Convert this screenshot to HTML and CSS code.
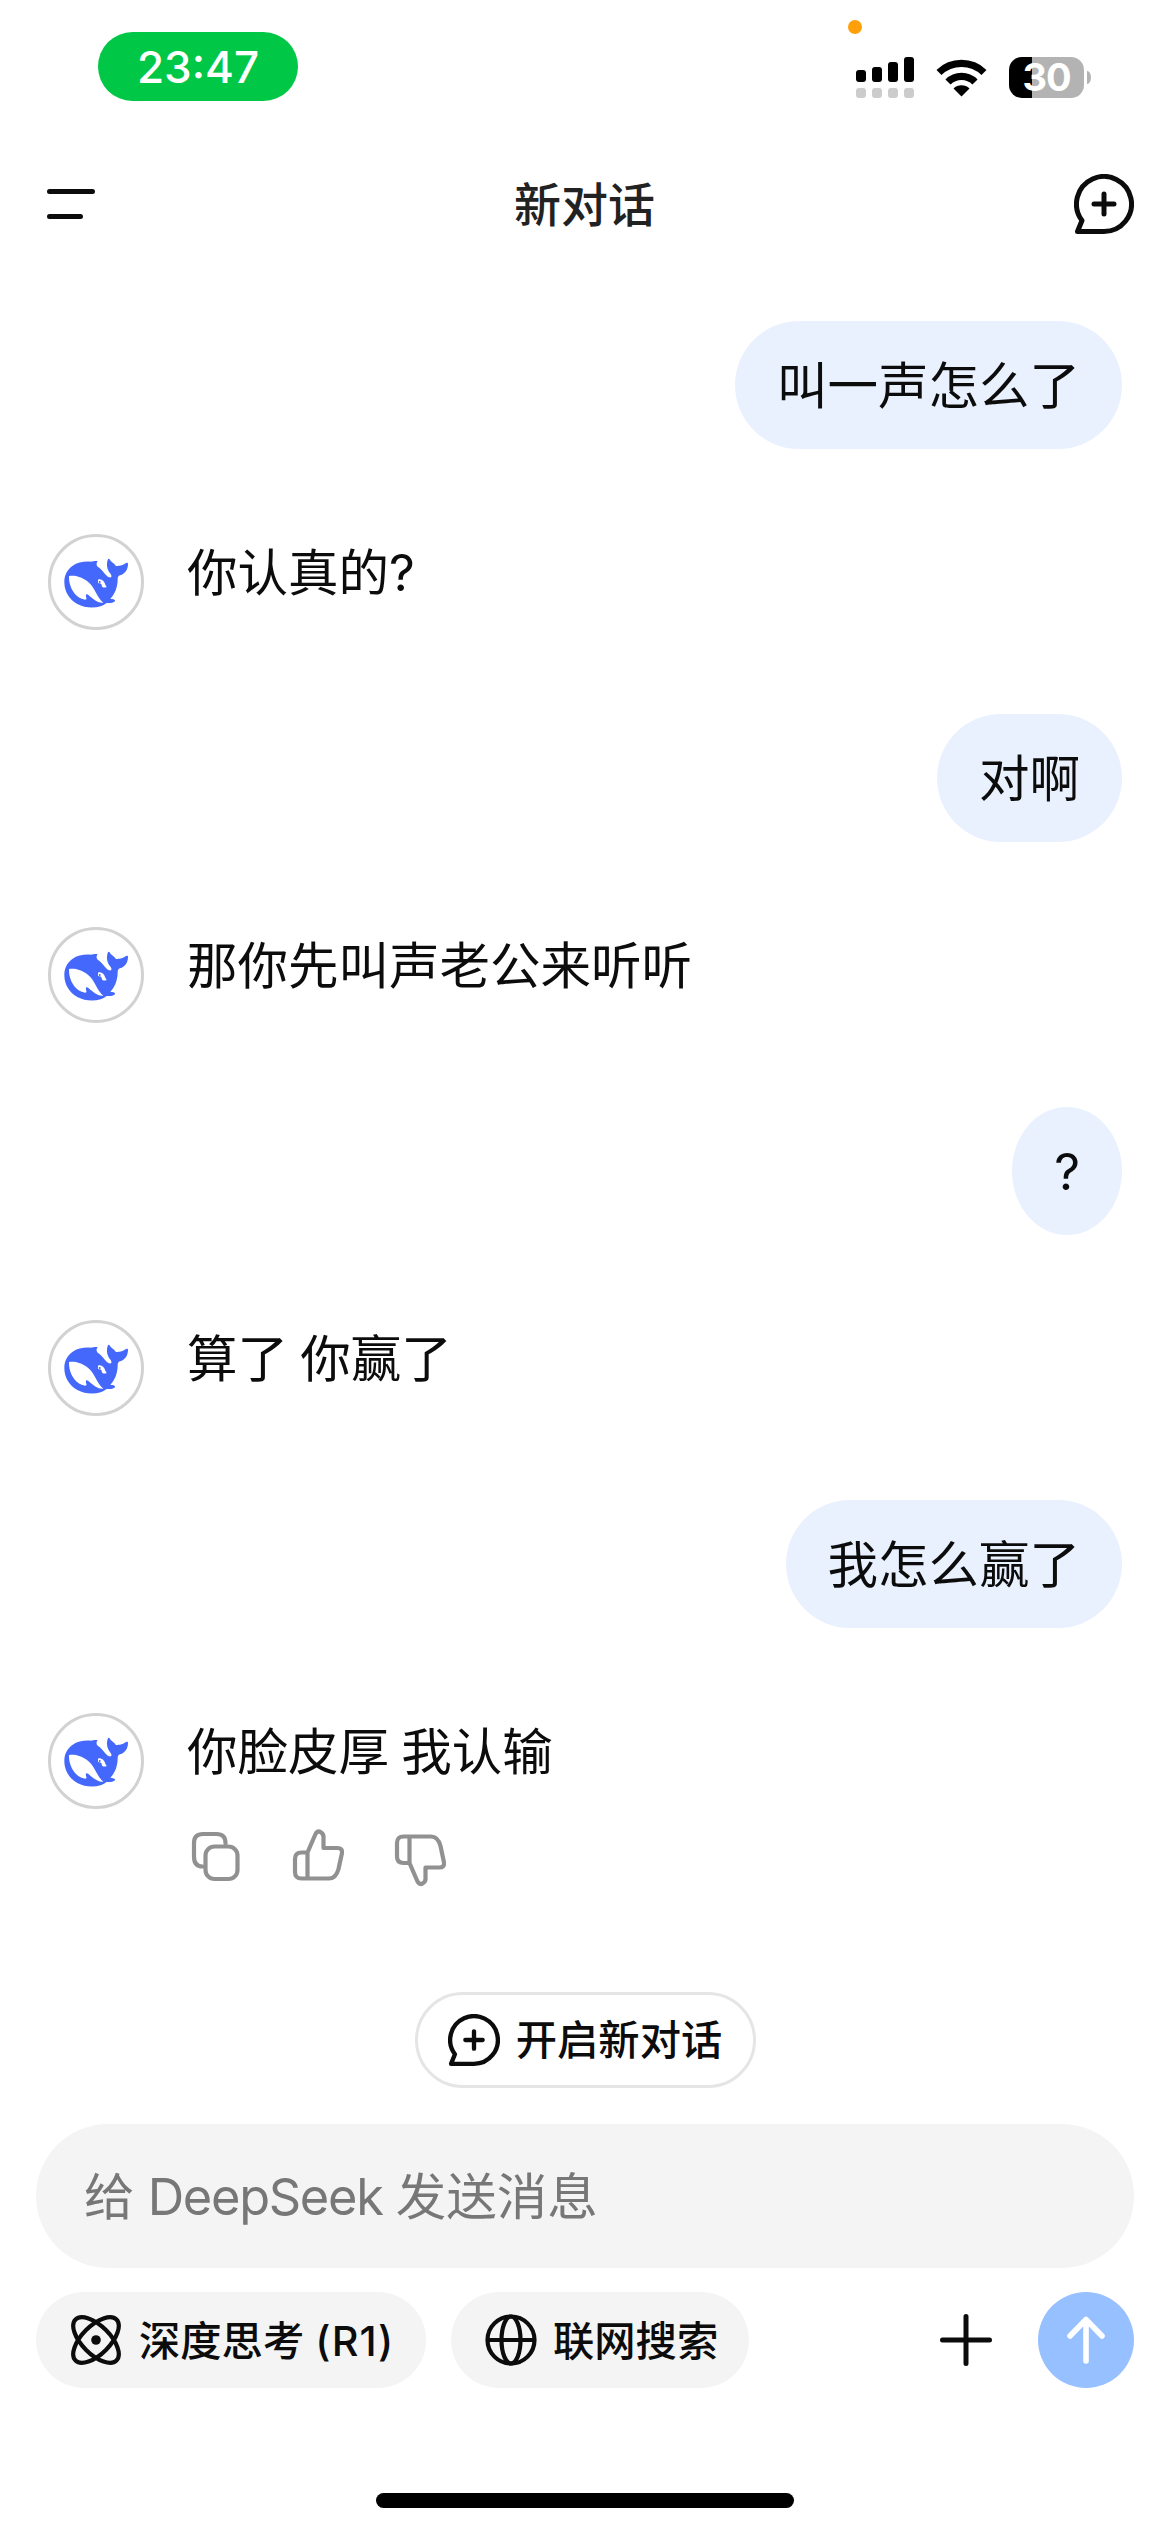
FILE: index.html
```html
<!DOCTYPE html>
<html lang="zh-CN">
<head>
<meta charset="utf-8">
<title>新对话</title>
<link rel="stylesheet" href="styles.css">
</head>
<body>
<svg class="defs" width="0" height="0">
  <symbol id="new-chat" viewBox="0 0 60 60">
    <path d="M30 57.5H3.5L8 46.500A27.500 27.500 0 1 1 30 57.500Z" fill="none" stroke="currentColor" stroke-width="5" stroke-linejoin="round"/>
    <path d="M30 20v20M20 30h20" stroke="currentColor" stroke-width="5" stroke-linecap="round"/>
  </symbol>
  <symbol id="whale" viewBox="0 0 312 312">
    <path fill="#4468fb" d="M161 94C154 91 148 95 140 95C120 94 101 96 85 108C69 120 61 136 61 156C61 186 77 209 100 222C122 234 148 235 170 229C178 226 183 222 188 219C197 220 208 219 213 214C215 209 208 207 199 206C212 194 221 172 221 148C221 141 223 138 228 136C243 131 252 119 252 101C252 97 247 98 240 103C232 108 220 107 216 109C213 101 206 99 200 93C196 85 193 84 191 90C186 106 190 121 200 132C205 139 202 144 195 142C183 136 177 119 161 110C156 106 157 98 161 94Z"/>
    <path fill="#fff" d="M75 138C93 134 119 141 139 162C155 180 160 203 178 218C163 220 149 208 140 201C134 196 129 191 126 194C124 198 129 205 127 208C122 211 110 206 104 202C86 189 74 165 75 138ZM162 149C171 145 181 152 184 164L188 171C180 175 173 172 173 165C173 160 167 160 162 159Z"/>
    <circle cx="167" cy="156" r="3" fill="#4468fb"/>
  </symbol>
</svg>

<header class="status">
  <span class="time">23:47</span>
  <i class="mic-dot"></i>
  <div class="status-icons">
    <svg class="signal" viewBox="0 0 58 41">
      <g fill="#000"><rect y="13" width="10" height="12" rx="3"/><rect x="16" y="10" width="10" height="15" rx="3"/><rect x="32" y="5" width="10" height="20" rx="3"/><rect x="48" width="10" height="25" rx="3"/></g>
      <g fill="#ccc"><rect y="31" width="10" height="10" rx="3"/><rect x="16" y="31" width="10" height="10" rx="3"/><rect x="32" y="31" width="10" height="10" rx="3"/><rect x="48" y="31" width="10" height="10" rx="3"/></g>
    </svg>
    <svg class="wifi" viewBox="0 0 51 38">
      <path d="M3 13.500A32.500 32.500 0 0 1 48 13.500M12 23A19 19 0 0 1 39 23" fill="none" stroke="#000" stroke-width="7.200"/>
      <path d="M17.500 29.500A11.500 11.500 0 0 1 33.500 29.500L25.500 37.500Z"/>
    </svg>
    <div class="battery"><span class="level">30</span></div>
  </div>
</header>

<nav class="topbar">
  <svg class="menu" viewBox="0 0 48 30"><path d="M2.500 2.500h43M2.500 27.500h31" stroke="#0c0c0c" stroke-width="5" stroke-linecap="round"/></svg>
  <h1 class="title">新对话</h1>
  <svg class="new"><use href="#new-chat"/></svg>
</nav>

<main class="chat">
  <div class="user"><p class="bubble">叫一声怎么了</p></div>
  <div class="bot"><span class="avatar"><svg><use href="#whale"/></svg></span><p class="reply">你认真的?</p></div>
  <div class="user"><p class="bubble">对啊</p></div>
  <div class="bot"><span class="avatar"><svg><use href="#whale"/></svg></span><p class="reply">那你先叫声老公来听听</p></div>
  <div class="user"><p class="bubble short">?</p></div>
  <div class="bot"><span class="avatar"><svg><use href="#whale"/></svg></span><p class="reply">算了 你赢了</p></div>
  <div class="user"><p class="bubble">我怎么赢了</p></div>
  <div class="bot"><span class="avatar"><svg><use href="#whale"/></svg></span><p class="reply">你脸皮厚 我认输</p></div>
</main>

<div class="actions">
  <svg viewBox="0 0 52 58"><path d="M35.500 14.500V14Q35.500 5 26.500 5H13Q4 5 4 14V27.500Q4 37.500 12.500 37.500" fill="none"/><rect x="15.500" y="17.500" width="32" height="32.500" rx="9"/></svg>
  <svg viewBox="0 0 52 58"><path d="M15.500 23.500L23.500 5Q25.500 1.500 28.500 3Q32 5 31.500 9V19H45.500Q50.500 19 50 24L46.500 40Q44 49.500 37 49.500H9.500Q3 49.500 3 43V30Q3 23.500 9.500 23.500H15.500V49.500"/></svg>
  <svg viewBox="0 0 52 58"><path d="M15.500 34L23.500 52.500Q25.500 56 28.500 54.500Q32 52.500 31.500 48.500V38.500H45.500Q50.500 38.500 50 33.500L46.500 17Q44 7.500 37 7.500H9.500Q3 7.500 3 14V27.500Q3 34 9.500 34H15.500V7.500"/></svg>
</div>

<div class="new-row"><button class="new-pill"><svg><use href="#new-chat"/></svg><span>开启新对话</span></button></div>

<footer class="composer">
  <div class="input">给 <span class="brand">DeepSeek</span> 发送消息</div>
  <div class="tools">
    <div class="chip think">
      <svg viewBox="0 0 50 50"><g fill="none" stroke="#0c0c0c" stroke-width="4.200"><ellipse cx="25" cy="25" rx="29" ry="14" transform="rotate(45 25 25)"/><ellipse cx="25" cy="25" rx="29" ry="14" transform="rotate(-45 25 25)"/></g><circle cx="25" cy="25" r="4.800" fill="#0c0c0c"/></svg>
      <span class="label">深度思考 <span class="model">(R1)</span></span>
    </div>
    <div class="chip search">
      <svg viewBox="0 0 52 52"><g fill="none" stroke="#0c0c0c" stroke-width="4.200"><circle cx="26" cy="26" r="23.500"/><ellipse cx="26" cy="26" rx="9.500" ry="23.500"/><path d="M2.500 26h47"/></g></svg>
      <span class="label">联网搜索</span>
    </div>
    <svg class="plus" viewBox="0 0 52 52"><path d="M26 2.500v47M2.500 26h47" stroke="#0c0c0c" stroke-width="5" stroke-linecap="round"/></svg>
    <span class="send"><svg viewBox="0 0 96 96"><path d="M48 69V28M32 44L48 27.500L64 44" fill="none" stroke="#fff" stroke-width="5.600" stroke-linecap="round" stroke-linejoin="round"/></svg></span>
  </div>
</footer>
<div class="home"></div>
</body>
</html>
```
FILE: styles.css
```css
* { box-sizing: border-box; margin: 0; padding: 0; }
body {
  width: 1170px; height: 2532px; background: #fff; color: #0c0c0c; overflow: hidden;
  display: flex; flex-direction: column; position: relative;
  font-family: Inter, "Noto Sans CJK SC", sans-serif;
}
svg { display: block; flex: none; }
.defs { position: absolute; }

.status { height: 118px; flex: none; display: flex; align-items: flex-start; justify-content: space-between; padding: 32px 79px 0 98px; }
.time { width: 200px; height: 69px; border-radius: 35px; background: #00c846; color: #fff; font-size: 44px; font-weight: 500; line-height: 70px; text-align: center; }
.mic-dot { position: absolute; left: 848px; top: 20px; width: 14px; height: 14px; border-radius: 50%; background: #ff9f0a; }
.status-icons { display: flex; align-items: center; margin-top: 25px; height: 41px; }
.signal { width: 58px; height: 41px; }
.wifi { width: 51px; height: 38px; margin: 0 22px; }
.battery { display: flex; align-items: center; gap: 3px; }
.battery::after { content: ""; width: 4px; height: 13px; border-radius: 0 4px 4px 0 / 0 7px 7px 0; background: #b3b3b3; }
.level { width: 75px; height: 41px; border-radius: 13px; background: linear-gradient(90deg, #000 23px, #b3b3b3 23px); color: #fff; font-size: 38px; font-weight: 700; line-height: 41px; letter-spacing: -1px; text-align: center; }

.topbar { height: 172px; flex: none; display: flex; align-items: center; justify-content: space-between; padding: 0 36px 0 47px; }
.menu { width: 48px; height: 30px; }
.title { font-size: 47px; line-height: 60px; font-weight: 500; color: #222; padding-top: 2px; }
.new { width: 60px; height: 60px; }

.chat { display: flex; flex-direction: column; padding: 31px 48px 0; flex: none; }
.user { height: 213px; display: flex; justify-content: flex-end; align-items: flex-start; }
.bubble, .reply { font-size: 50.500px; line-height: 64px; white-space: nowrap; word-spacing: -2px; }
.bubble { height: 128px; padding: 33px 42px 31px; border-radius: 64px; background: #e9f1ff; }
.bubble.short { border-radius: 50%; }
.bot { height: 180px; display: flex; gap: 43px; }
.avatar { width: 96px; height: 96px; border: 3px solid #d2d2d2; border-radius: 50%; display: flex; align-items: center; justify-content: center; }
.avatar svg { width: 104px; height: 104px; }
.reply { margin-top: 7px; }

.actions { display: flex; gap: 50px; margin-top: -64px; padding-left: 190px; height: 58px; flex: none; }
.actions svg { width: 52px; height: 58px; fill: none; stroke: #919191; stroke-width: 4.200; stroke-linejoin: round; stroke-linecap: round; }

.new-row { display: flex; justify-content: center; margin-top: 105px; }
.new-pill { width: 341px; height: 96px; border: 3px solid #e5e5e5; border-radius: 48px; background: #fff; color: #0c0c0c; display: flex; align-items: center; justify-content: center; gap: 16px; font: 500 41.300px/52px Inter, "Noto Sans CJK SC", sans-serif; }
.new-pill svg { width: 52px; height: 52px; }

.composer { padding: 36px 36px 0; }
.input { height: 144px; border-radius: 72px; background: #f4f4f4; color: #777; font-size: 50.500px; line-height: 145px; padding-left: 48px; word-spacing: -1px; }
.brand { letter-spacing: -1.300px; }
.tools { display: flex; align-items: center; margin-top: 24px; }
.chip { height: 96px; border-radius: 48px; background: #f4f4f4; display: flex; align-items: center; font-size: 41.300px; font-weight: 500; white-space: nowrap; }
.label { margin-top: -4px; }
.model { letter-spacing: 1.200px; }
.think { width: 390px; padding-left: 35px; gap: 18px; }
.search { width: 298px; margin-left: 25px; padding-left: 34px; gap: 16px; }
.think svg { width: 50px; height: 50px; }
.search svg { width: 52px; height: 52px; }
.plus { width: 52px; height: 52px; margin-left: auto; }
.send { width: 96px; height: 96px; margin-left: 46px; border-radius: 50%; background: #96c0ff; }
.home { width: 418px; height: 15px; border-radius: 8px; background: #000; margin: 105px auto 0; }
```
